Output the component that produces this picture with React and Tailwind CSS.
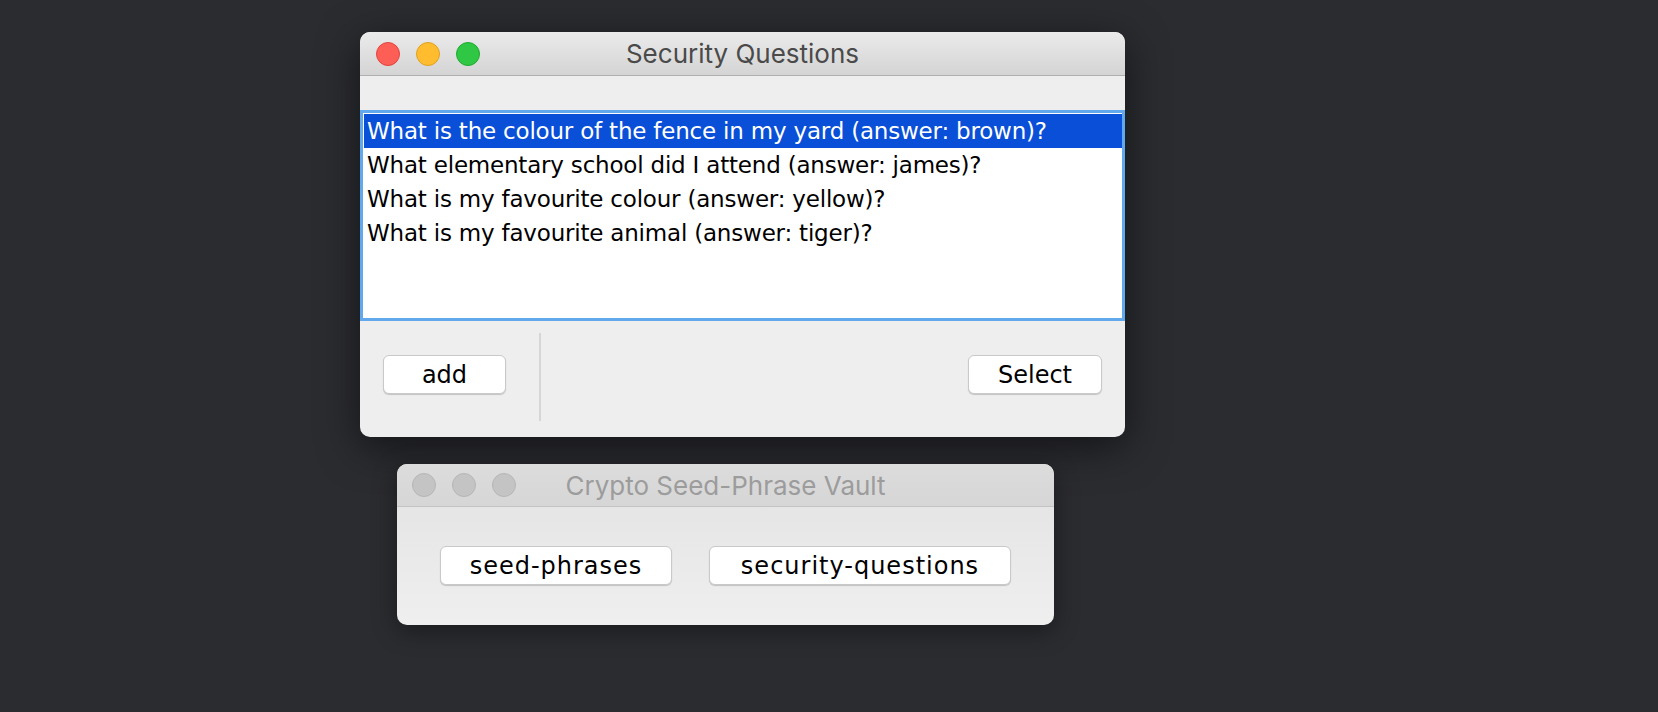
import React from "react";

const QUESTIONS = [
  "What is the colour of the fence in my yard (answer: brown)?",
  "What elementary school did I attend (answer: james)?",
  "What is my favourite colour (answer: yellow)?",
  "What is my favourite animal (answer: tiger)?",
];

const listFont = { fontFamily: '"DejaVu Sans", "Liberation Sans", sans-serif' };
const titleFont = { fontFamily: 'Inter, "Liberation Sans", sans-serif' };

function TrafficLights({ active }) {
  if (!active) {
    return (
      <div className="flex items-center gap-[16px] pl-[15px]">
        <span className="w-[24px] h-[24px] rounded-full bg-[#c4c4c4] border border-[#b6b6b6]" />
        <span className="w-[24px] h-[24px] rounded-full bg-[#c4c4c4] border border-[#b6b6b6]" />
        <span className="w-[24px] h-[24px] rounded-full bg-[#c4c4c4] border border-[#b6b6b6]" />
      </div>
    );
  }
  return (
    <div className="flex items-center gap-[16px] pl-[16px]">
      <span className="w-[24px] h-[24px] rounded-full bg-[#fd5f57] border border-[#e0443e]" />
      <span className="w-[24px] h-[24px] rounded-full bg-[#febc2e] border border-[#dea123]" />
      <span className="w-[24px] h-[24px] rounded-full bg-[#2fc744] border border-[#1fab2f]" />
    </div>
  );
}

function MacButton({ label, className }) {
  return (
    <button
      className={`h-[39px] rounded-[6px] bg-white border border-[#c9c9c9] shadow-[0_1px_1px_rgba(0,0,0,0.18)] text-[24px] leading-none text-black flex items-center justify-center ${className}`}
      style={listFont}
    >
      {label}
    </button>
  );
}

function SecurityQuestionsWindow() {
  const [selected, setSelected] = React.useState(0);

  return (
    <div className="w-[765px] h-[405px] rounded-[10px] overflow-hidden bg-[#eeeeee] shadow-[0_10px_40px_rgba(0,0,0,0.55)] flex flex-col">
      <div className="relative h-[44px] shrink-0 flex items-center bg-gradient-to-b from-[#ebebeb] to-[#d4d4d4] border-b border-[#afafaf]">
        <TrafficLights active />
        <div className="absolute inset-0 flex items-center justify-center text-[26px] text-[#4a4a4a]" style={titleFont}>
          Security Questions
        </div>
      </div>

      <div className="h-[34px] shrink-0" />

      <div className="h-[211px] shrink-0 bg-white border-[3px] border-[#62a8ec] pl-[1px] pt-[1px]" style={listFont}>
        {QUESTIONS.map((q, i) => (
          <div
            key={q}
            onClick={() => setSelected(i)}
            className={`h-[34px] flex items-center pl-[3px] text-[23px] tracking-[-0.2px] whitespace-nowrap ${
              i === selected ? "bg-[#0a4fd7] text-white" : "text-black"
            }`}
          >
            {q}
          </div>
        ))}
      </div>

      <div className="flex-1 flex items-start px-[23px]">
        <MacButton label="add" className="w-[123px] mt-[34px]" />
        <div className="w-[2px] h-[88px] mt-[12px] ml-[33px] bg-[#d6d6d6]" />
        <div className="flex-1" />
        <MacButton label="Select" className="w-[134px] mt-[34px]" />
      </div>
    </div>
  );
}

function VaultWindow() {
  return (
    <div className="w-[657px] h-[161px] rounded-[10px] overflow-hidden bg-gradient-to-b from-[#e2e2e2] to-[#efefef] shadow-[0_6px_24px_rgba(0,0,0,0.4)] flex flex-col">
      <div className="relative h-[43px] shrink-0 flex items-center bg-gradient-to-b from-[#dcdcdc] to-[#d6d6d6] border-b border-[#c4c4c4]">
        <TrafficLights />
        <div className="absolute inset-0 flex items-center justify-center text-[26px] text-[#9c9c9c]" style={titleFont}>
          Crypto Seed-Phrase Vault
        </div>
      </div>
      <div className="flex justify-center gap-[37px] pt-[39px]">
        <MacButton label="seed-phrases" className="w-[232px] h-[38px] tracking-[1px]" />
        <MacButton label="security-questions" className="w-[302px] h-[38px] tracking-[1px]" />
      </div>
    </div>
  );
}

export default function App() {
  return (
    <div className="w-full min-h-[712px] bg-[#2b2c30] flex flex-col">
      <div className="ml-[360px] mt-[32px]">
        <SecurityQuestionsWindow />
      </div>
      <div className="ml-[397px] mt-[27px]">
        <VaultWindow />
      </div>
    </div>
  );
}
